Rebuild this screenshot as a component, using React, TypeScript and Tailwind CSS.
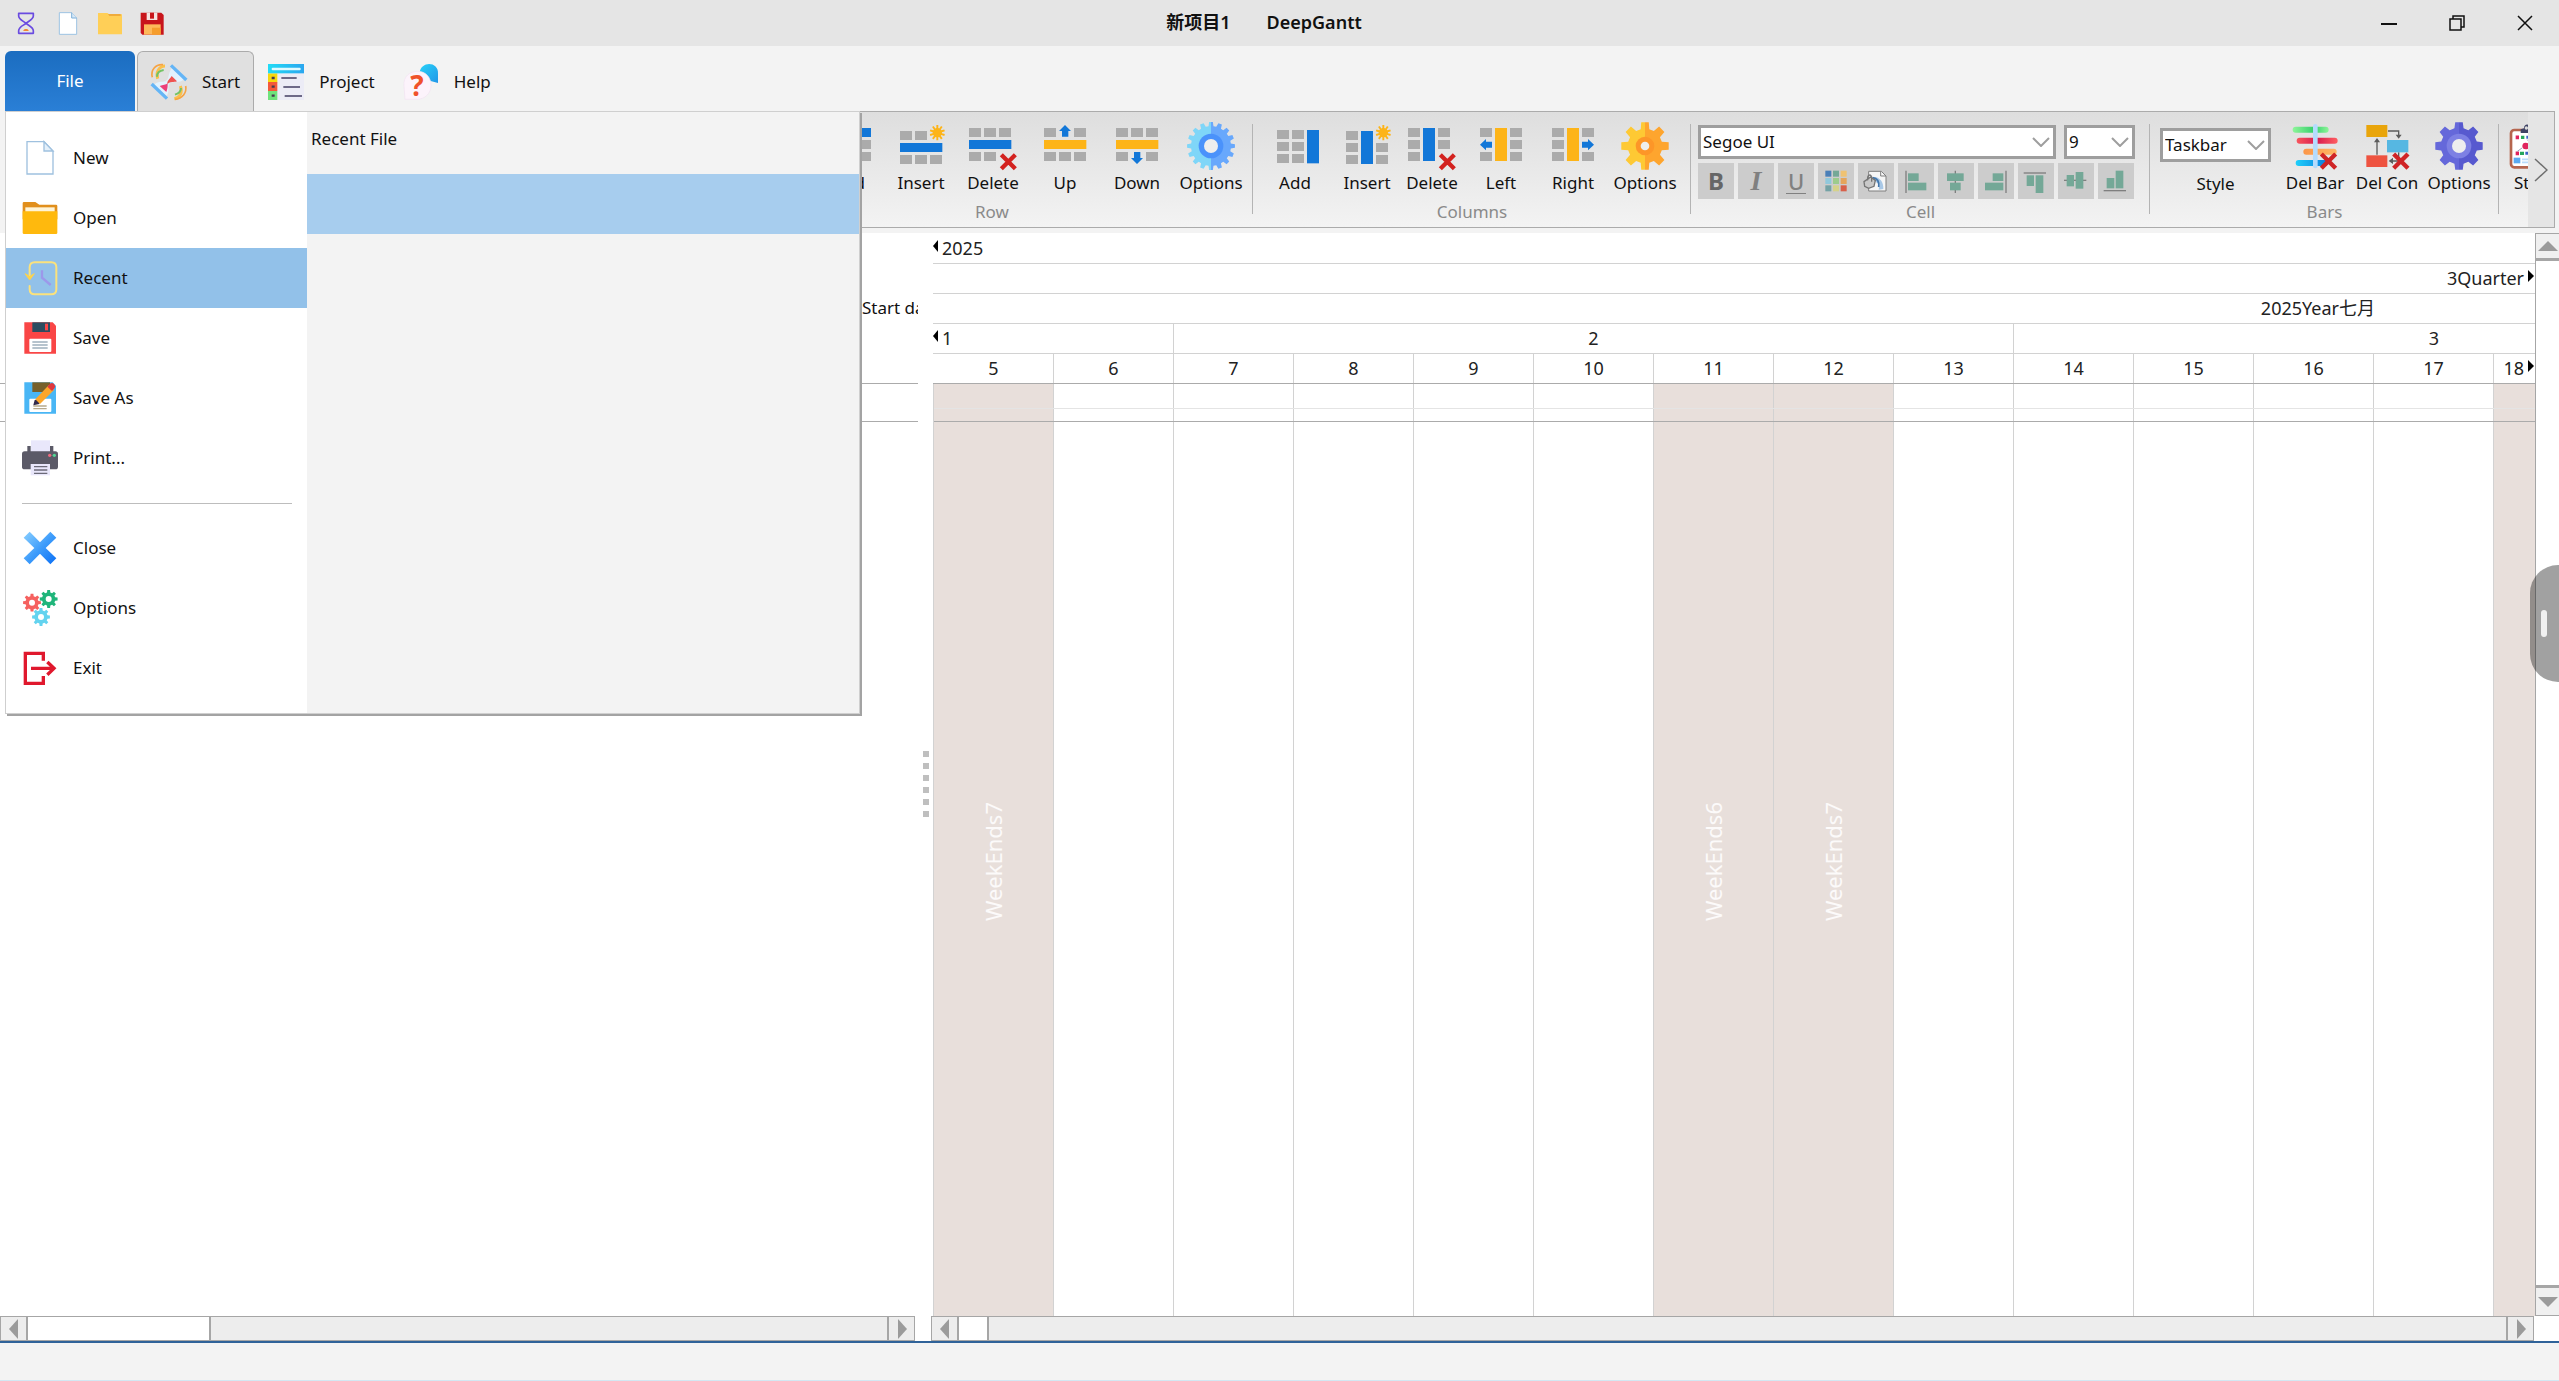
import type { ReactNode } from "react";
import clsx from "clsx";

const FONT = "font-['Noto_Sans','Noto_Sans_CJK_SC',sans-serif]";

function gearPath(cx: number, cy: number, outer: number, inner: number, teeth: number) {
  const pts: string[] = [];
  const step = (Math.PI * 2) / teeth;
  for (let i = 0; i < teeth; i++) {
    const a = i * step - Math.PI / 2;
    [
      [inner, -0.32],
      [outer, -0.2],
      [outer, 0.2],
      [inner, 0.32],
    ].forEach(([r, o]) => {
      pts.push(`${(cx + r * Math.cos(a + o * step)).toFixed(1)} ${(cy + r * Math.sin(a + o * step)).toFixed(1)}`);
    });
  }
  return `M${pts.join("L")}Z`;
}

/* ---------- icon helpers ---------- */

function Svg({ size, box, children }: { size: string; box: number; children: ReactNode }) {
  return (
    <svg className={clsx(size, "shrink-0 overflow-visible")} viewBox={`0 0 ${box} ${box}`} fill="none" aria-hidden="true">
      {children}
    </svg>
  );
}

const Big = ({ children }: { children: ReactNode }) => (
  <Svg size="size-12" box={144}>
    {children}
  </Svg>
);

const Mid = ({ children }: { children: ReactNode }) => (
  <Svg size="size-9" box={108}>
    {children}
  </Svg>
);

const Small = ({ children }: { children: ReactNode }) => (
  <Svg size="size-6" box={72}>
    {children}
  </Svg>
);

const GREY = "#ababab";
const BLUE = "#1277d8";
const AMBER = "#fdb418";

function Cells({ at }: { at: number[][] }) {
  return (
    <>
      {at.map(([x, y]) => (
        <rect key={`${x}-${y}`} x={x} y={y} width="36" height="27" fill={GREY} />
      ))}
    </>
  );
}

const RedCross = ({ y = 95 }: { y?: number }) => (
  <path d={`M97 ${y + 3}l42 42m0-42l-42 42`} stroke="#d3221f" strokeWidth="13" />
);

const Spark = () => <path d={gearPath(121, 32, 23, 14, 10)} fill={AMBER} />;

const RowAdd = () => (
  <Big>
    <rect x="9" y="18" width="129" height="27" fill={BLUE} />
    <Cells at={[[9, 54], [54, 54], [102, 54], [9, 90], [54, 90], [102, 90]]} />
  </Big>
);
const RowInsert = () => (
  <Big>
    <Cells at={[[9, 27], [54, 27], [9, 99], [54, 99], [99, 99]]} />
    <rect x="9" y="63" width="127" height="27" fill={BLUE} />
    <Spark />
  </Big>
);
const RowDelete = () => (
  <Big>
    <Cells at={[[0, 18], [45, 18], [90, 18], [0, 90], [45, 90]]} />
    <rect x="0" y="54" width="127" height="27" fill={BLUE} />
    <RedCross />
  </Big>
);
const RowUp = () => (
  <Big>
    <Cells at={[[9, 18], [99, 18], [9, 90], [54, 90], [99, 90]]} />
    <rect x="9" y="54" width="127" height="27" fill={AMBER} />
    <path d="M72 9l18 18H82v17H63V27H54z" fill={BLUE} />
  </Big>
);
const RowDown = () => (
  <Big>
    <Cells at={[[9, 18], [54, 18], [99, 18], [9, 90], [99, 90]]} />
    <rect x="9" y="54" width="127" height="27" fill={AMBER} />
    <path d="M72 126l18-18H82V90H63v18H54z" fill={BLUE} />
  </Big>
);
const ColAdd = () => (
  <Big>
    <Cells at={[[18, 24], [63, 24], [18, 60], [63, 60], [18, 96], [63, 96]]} />
    <rect x="108" y="24" width="36" height="100" fill={BLUE} />
  </Big>
);
const ColInsert = () => (
  <Big>
    <Cells at={[[9, 27], [9, 63], [99, 63], [9, 99], [99, 99]]} />
    <rect x="54" y="27" width="36" height="99" fill={BLUE} />
    <Spark />
  </Big>
);
const ColDelete = () => (
  <Big>
    <Cells at={[[0, 18], [90, 18], [0, 54], [90, 54], [0, 90]]} />
    <rect x="45" y="18" width="36" height="99" fill={BLUE} />
    <RedCross />
  </Big>
);
const ColLeft = () => (
  <Big>
    <Cells at={[[9, 18], [99, 18], [99, 54], [9, 90], [99, 90]]} />
    <rect x="54" y="18" width="36" height="99" fill={AMBER} />
    <path d="M9 68l18-17v8h18v18H27v8z" fill={BLUE} />
  </Big>
);
const ColRight = () => (
  <Big>
    <Cells at={[[9, 18], [99, 18], [9, 54], [9, 90], [99, 90]]} />
    <rect x="54" y="18" width="36" height="99" fill={AMBER} />
    <path d="M135 68l-18-17v8H99v18h18v8z" fill={BLUE} />
  </Big>
);

function BigGear({ id, left, right, ring, ringSize, hole, teeth, inner }: { id: string; left: string; right: string; ring: string; ringSize: number; hole: number; teeth: number; inner: number }) {
  return (
    <Big>
      <linearGradient id={id}>
        <stop offset="0.5" stopColor={left} />
        <stop offset="0.5" stopColor={right} />
      </linearGradient>
      <path d={gearPath(72, 72, 72, inner, teeth)} fill={`url(#${id})`} />
      <circle cx="72" cy="72" r={ringSize} fill={ring} />
      <circle cx="72" cy="72" r={hole} fill="#eeeeee" />
    </Big>
  );
}

const BlueGear = () => <BigGear id="gb" left="#7fd6f8" right="#68a8fc" ring="#4a92fb" ringSize={37} hole={21} teeth={16} inner={60} />;
const OrangeGear = () => <BigGear id="go" left="#fec934" right="#fea52e" ring="#fd9628" ringSize={28} hole={13} teeth={8} inner={52} />;
const PurpleGear = () => <BigGear id="gp" left="#6568da" right="#5759cf" ring="#7d80e4" ringSize={37} hole={21} teeth={8} inner={55} />;

const DelBar = () => (
  <Big>
    <linearGradient id="d1"><stop stopColor="#8ff59a" /><stop offset=".6" stopColor="#35cf6c" /><stop offset="1" stopColor="#8ff59a" /></linearGradient>
    <linearGradient id="d2"><stop stopColor="#f8555d" /><stop offset=".5" stopColor="#d81b4e" /><stop offset="1" stopColor="#ff5f62" /></linearGradient>
    <linearGradient id="d3"><stop stopColor="#fb9648" /><stop offset="1" stopColor="#ffb765" /></linearGradient>
    <linearGradient id="d4"><stop stopColor="#1fd0fb" /><stop offset="1" stopColor="#0b7bdc" /></linearGradient>
    <rect x="5" y="14" width="108" height="18" rx="9" fill="url(#d1)" />
    <rect x="17" y="47" width="123" height="18" rx="9" fill="url(#d2)" />
    <rect x="37" y="80" width="100" height="18" rx="9" fill="url(#d3)" />
    <rect x="14" y="114" width="96" height="18" rx="9" fill="url(#d4)" />
    <rect x="66" y="6" width="14" height="133" rx="7" fill="#b5dcfd" />
    <path d="M91 96l43 43m0-43l-43 43" stroke="#cf2426" strokeWidth="13" />
  </Big>
);

const DelCon = () => (
  <Big>
    <path d="M75 27h32v14M42 98V58M107 91v26H84" stroke="#5c5c5c" strokeWidth="4" />
    <path d="M98 38h18l-9 12zM33 61h18l-9-13zM90 107v19l-13-9z" fill="#5c5c5c" />
    <rect x="10" y="9" width="63" height="36" fill="#e9a50b" />
    <rect x="72" y="54" width="64" height="37" fill="#56b7e2" />
    <rect x="10" y="100" width="63" height="35" fill="#ee5340" />
    <path d="M92 96l43 43m0-43l-43 43" stroke="#cf2426" strokeWidth="13" />
  </Big>
);

const Clipboard = () => (
  <Big>
    <rect x="3" y="24" width="120" height="112" rx="10" fill="#fff" stroke="#b5654e" strokeWidth="8" />
    <path d="M32 33V22l10-3c0-15 18-15 18 0l12 3v11z" fill="#3e4264" />
    <circle cx="49" cy="18" r="5" fill="#dcdcdc" />
    <path d="M17 46h10M17 94h10" stroke="#e0245e" strokeWidth="11" />
    <path d="M33 46h10M30 94h12" stroke="#26a65b" strokeWidth="10" />
    <path d="M49 46h9M46 94h12" stroke="#3c63c8" strokeWidth="9" />
    <circle cx="47" cy="72" r="10" fill="#e0245e" />
    <path d="M22 88l14-10M60 62l-8-9" stroke="#9aa0b8" strokeWidth="3" />
    <rect x="11" y="107" width="20" height="17" fill="#5aaaf2" />
    <path d="M36 112h26M36 121h26" stroke="#b9dcfb" strokeWidth="5" />
  </Big>
);

/* cell toolbar */

const Sage = "#74a897";

function AlignIcon({ line, a, b }: { line: string; a: number[]; b: number[] }) {
  return (
    <Mid>
      <path d={line} stroke="#7f7f7f" strokeWidth="4" />
      <rect x={a[0]} y={a[1]} width={a[2]} height={a[3]} fill={Sage} />
      <rect x={b[0]} y={b[1]} width={b[2]} height={b[3]} fill={Sage} />
    </Mid>
  );
}

const swatches = ["#4a7fb8", "#74a897", "#efc272", "#90c8dc", "#9ccb8d", "#e5a55c", "#74a2a5", "#d5d28a", "#d8604a"];

const Palette = () => (
  <Mid>
    {swatches.map((c, i) => (
      <rect key={c} x={22 + (i % 3) * 23} y={23 + Math.floor(i / 3) * 22} width="18" height="18" fill={c} />
    ))}
  </Mid>
);

const FillIcon = () => (
  <Mid>
    <path d="M32 25h38l14 14v45H32z" fill="#f6f6f6" stroke="#7f7f7f" strokeWidth="3" />
    <path d="M68 25v14h16" stroke="#7f7f7f" strokeWidth="3" />
    <path d="M36 44c22-8 42 8 40 34l-14 2c4-16-4-24-18-26z" fill="#a9c8e6" />
    <path d="M44 44c14 2 20 12 18 28" stroke="#4377ad" strokeWidth="5" />
    <path d="M18 56l20-14 14 10-4 18-16 6-12-6z" fill="#c9c9c9" stroke="#757575" strokeWidth="4" />
    <path d="M29 52c-2-20 12-20 12-6v10" stroke="#757575" strokeWidth="4" />
  </Mid>
);

const cellTools = [
  { name: "Bold", icon: <span className="text-2xl font-bold text-[#666666]">B</span> },
  { name: "Italic", icon: <span className="font-['Liberation_Serif',serif] text-[28px] font-bold text-[#808080] italic">I</span> },
  { name: "Underline", icon: <span className="border-b border-[#808080] px-0.5 text-[22px] leading-6 font-medium text-[#808080]">U</span> },
  { name: "Text colour", icon: <Palette /> },
  { name: "Fill colour", icon: <FillIcon /> },
  { name: "Align left", icon: <AlignIcon line="M24 23v67" a={[30, 31, 32, 23]} b={[30, 59, 55, 23]} /> },
  { name: "Align centre", icon: <AlignIcon line="M52 23v67" a={[27, 31, 50, 23]} b={[36, 59, 32, 23]} /> },
  { name: "Align right", icon: <AlignIcon line="M84 23v67" a={[44, 31, 32, 23]} b={[21, 59, 55, 23]} /> },
  { name: "Align top", icon: <AlignIcon line="M17 30h67" a={[26, 37, 22, 32]} b={[53, 37, 23, 53]} /> },
  { name: "Align middle", icon: <AlignIcon line="M18 52h67" a={[26, 36, 22, 34]} b={[53, 27, 23, 50]} /> },
  { name: "Align bottom", icon: <AlignIcon line="M17 83h67" a={[26, 45, 23, 31]} b={[53, 23, 23, 53]} /> },
];

/* quick access */

const quick = [
  {
    name: "DeepGantt",
    icon: (
      <Small>
        <path d="M14 7h44v8c0 10-17 17-22 22-5 5-22 10-22 22v8h44v-8c0-10-15-16-22-22S14 25 14 15z" stroke="#6a4be0" strokeWidth="5" strokeLinejoin="round" />
        <path d="M28 60c0-8 16-8 16 0z" fill="#f58634" />
      </Small>
    ),
  },
  {
    name: "New",
    icon: (
      <Small>
        <path d="M10 5h37l15 16v49H10z" fill="#fff" stroke="#9dc3e3" strokeWidth="3" />
        <path d="M47 5v16h15" fill="#d6e8f7" stroke="#7fb0d8" strokeWidth="3" />
      </Small>
    ),
  },
  {
    name: "Open",
    icon: (
      <Small>
        <path d="M0 6h28l6 4h38v60H0z" fill="#ffcf57" />
        <path d="M30 9h38v6H34z" fill="#efab3c" />
      </Small>
    ),
  },
  {
    name: "Save",
    icon: (
      <Small>
        <path d="M2 5h62l7 7v59H7l-5-5z" fill="#c8151b" />
        <rect x="20" y="5" width="32" height="22" fill="#f5e3e1" />
        <path d="M30 5h12v18H30z" fill="#c8151b" />
        <path d="M12 40h50v31H12z" fill="#fdb95a" />
        <path d="M12 50h50v21H36V50z" fill="#f59d2c" />
      </Small>
    ),
  },
];

/* tabs */

const StartIcon = () => (
  <Mid>
    <path d="M20 44c-6-18 4-38 22-38" stroke="#fbc04b" strokeWidth="9" />
    <path d="M4 40C-2 18 14 0 36 2" stroke="#f6a343" strokeWidth="5" />
    <path d="M18 38c0-12 6-18 20-20" stroke="#74c365" strokeWidth="6" />
    <path d="M88 66c8 18-2 36-18 38" stroke="#fbc04b" strokeWidth="9" />
    <path d="M104 66c4 20-10 38-32 40" stroke="#f6a343" strokeWidth="5" />
    <path d="M90 72c0 12-6 16-18 20" stroke="#74c365" strokeWidth="6" />
    <path d="M64 12l34 34c-12 14-30 4-42 12-8 12 2 24-10 38L10 62c12-14 28-4 38-14 8-10 4-26 16-36z" fill="#e3f2fd" />
    <path d="M62 36l16 16c-10 4-20 0-28 8-4-8 6-14 12-24z" fill="#ef5350" />
    <path d="M50 58c0 10 0 16-4 26L26 66c10-4 18-2 24-8z" fill="#ec407a" />
    <path d="M60 4l46 44" stroke="#64b5f6" strokeWidth="10" />
    <path d="M2 60l46 44" stroke="#64b5f6" strokeWidth="10" />
  </Mid>
);

const ProjectIcon = () => (
  <Mid>
    <linearGradient id="pj"><stop stopColor="#21dcf6" /><stop offset="1" stopColor="#2aa6ef" /></linearGradient>
    <rect x="28" y="26" width="80" height="82" fill="#ececf6" />
    <rect y="28" width="28" height="27" fill="#f6d80d" />
    <rect y="54" width="28" height="27" fill="#f4583a" />
    <rect y="81" width="28" height="27" fill="#6fe37b" />
    <path d="M11 42h9M11 68h9M11 95h9" stroke="#463a4e" strokeWidth="7" />
    <path d="M40 42h46M46 69h50M50 96h52" stroke="#433e63" strokeWidth="5" />
    <rect width="108" height="28" fill="url(#pj)" />
    <rect x="11" y="11" width="87" height="8" rx="3" fill="#dffaff" />
  </Mid>
);

const HelpIcon = () => (
  <Mid>
    <linearGradient id="hp" x1="0" y1="0" x2="1" y2="1"><stop stopColor="#28d2f8" /><stop offset="1" stopColor="#2196e8" /></linearGradient>
    <path d="M50 26C54-10 108-8 105 30v27l-22-6z" fill="url(#hp)" />
    <path d="M6 106l-3-40C0 36 22 22 44 22c24 0 40 18 40 42s-18 42-42 42z" fill="#fcf3fb" stroke="#f1e2f2" strokeWidth="2" />
    <text x="42" y="95" textAnchor="middle" className="text-[84px] leading-none font-bold" fill="#f0512b">?</text>
  </Mid>
);

const tabs = [
  { label: "Start", icon: <StartIcon />, style: "ml-0.5 gap-[15px] px-[13px] border-[#ababab] bg-[#e0e0e0]" },
  { label: "Project", icon: <ProjectIcon />, style: "gap-[15px] px-[13px] border-transparent" },
  { label: "Help", icon: <HelpIcon />, style: "gap-[15px] px-[13px] border-transparent" },
];

/* file menu */

function Floppy({ body, shutter, accent }: { body: string; shutter: string; accent: string }) {
  return (
    <>
      <path d="M7 7h85l10 10v84H7z" fill={body} />
      <rect x="31" y="7" width="53" height="29" fill={shutter} />
      <rect x="69" y="11" width="9" height="20" fill={accent} />
      <rect x="22" y="56" width="66" height="40" rx="3" fill="#fff" />
    </>
  );
}

const menuTop = [
  {
    label: "New",
    icon: (
      <Mid>
        <path d="M15 5h51l27 28v69H15z" fill="#fff" stroke="#9fc1df" strokeWidth="4" />
        <path d="M66 5v28h27z" fill="#e4f0fa" stroke="#9fc1df" strokeWidth="4" />
      </Mid>
    ),
  },
  {
    label: "Open",
    icon: (
      <Mid>
        <path d="M2 10q0-4 4-4h34l12 8h50q4 0 4 4v40H2z" fill="#e18f1c" />
        <path d="M10 22h88v20H10z" fill="#fff4d6" />
        <path d="M2 34h104v64q0 4-4 4H6q-4 0-4-4z" fill="#ffb90d" />
      </Mid>
    ),
  },
  {
    label: "Recent",
    icon: (
      <Mid>
        <path d="M23 50V22q0-15 15-15h50q15 0 15 15v66q0 15-15 15H38q-15 0-15-15V78" stroke="#fbe27c" strokeWidth="6" strokeLinecap="round" />
        <path d="M9 41l14 19 14-19-14 8z" fill="#fbd34f" stroke="#fbd34f" strokeWidth="3" />
        <path d="M60 31v22l26 22" stroke="#9c98ea" strokeWidth="7" />
      </Mid>
    ),
  },
  {
    label: "Save",
    icon: (
      <Mid>
        <Floppy body="#f94646" shutter="#2c4c60" accent="#f94646" />
        <path d="M31 66h46M31 75h46M31 84h46" stroke="#9eb0bd" strokeWidth="4" />
      </Mid>
    ),
  },
  {
    label: "Save As",
    icon: (
      <Mid>
        <Floppy body="#49b6f5" shutter="#77602a" accent="#77602a" />
        <path d="M34 78h40M34 86h40" stroke="#b7a98c" strokeWidth="4" />
        <path d="M38 60l16-2-2 14-18 4z" fill="#322a4b" />
        <path d="M40 58l40-42 16 14-42 42z" fill="#fca62a" />
        <path d="M76 20l8-9q6-5 12 1t2 12l-8 9z" fill="#e0383f" />
      </Mid>
    ),
  },
  {
    label: "Print...",
    icon: (
      <Mid>
        <path d="M16 40V18h10v22M82 40V18h12v22" fill="#5b5a67" />
        <rect x="27" y="1" width="57" height="36" fill="#e9e7fb" />
        <rect y="34" width="108" height="54" rx="8" fill="#5b5a67" />
        <circle cx="83" cy="46" r="5" fill="#ef6a7e" />
        <circle cx="97" cy="46" r="5" fill="#54d695" />
        <rect x="26" y="72" width="58" height="34" fill="#e9e7fb" />
        <path d="M36 80h40M36 90h40M36 100h40" stroke="#6b6a78" strokeWidth="4" />
      </Mid>
    ),
  },
];

const menuBottom = [
  {
    label: "Close",
    icon: (
      <Mid>
        <linearGradient id="cx" x1="0" y1="0" x2="1" y2="1"><stop stopColor="#8bd0ff" /><stop offset=".5" stopColor="#3f9dfb" /><stop offset="1" stopColor="#0a6ff5" /></linearGradient>
        <path d="M23 5l31 32L85 5l18 18-32 31 32 31-18 18-31-32-31 32L5 85l32-31L5 23z" fill="url(#cx)" />
      </Mid>
    ),
  },
  {
    label: "Options",
    icon: (
      <Mid>
        <path d={gearPath(30, 38, 27, 20, 8)} fill="#f5615f" />
        <circle cx="30" cy="38" r="9" fill="#fff" />
        <path d={gearPath(80, 27, 27, 20, 8)} fill="#1fb57a" />
        <circle cx="80" cy="27" r="9" fill="#fff" />
        <path d={gearPath(57, 81, 27, 20, 8)} fill="#63d3ef" />
        <circle cx="57" cy="81" r="9" fill="#fff" />
      </Mid>
    ),
  },
  {
    label: "Exit",
    icon: (
      <Mid>
        <path d="M64 32V10H10v90h54V78" stroke="#e0182d" strokeWidth="10" />
        <path d="M27 55h66M76 36l20 19-20 19" stroke="#e0182d" strokeWidth="10" />
      </Mid>
    ),
  },
];

function MenuItem({ label, icon }: { label: string; icon: ReactNode }) {
  return (
    <button
      type="button"
      className={clsx("flex h-15 w-full items-center gap-[15px] pl-4 text-left", label === "Recent" && "bg-[#92c1e9]")}
    >
      {icon}
      {label}
    </button>
  );
}

function FileMenu() {
  return (
    <div className="absolute top-0 left-[5px] z-10 flex h-[603px] w-[855px] border border-[#cfcfcf] bg-white shadow-[2px_2px_0_#a3a3a3]">
      <nav className="w-[301px] shrink-0 pt-4">
        {menuTop.map((m) => (
          <MenuItem key={m.label} {...m} />
        ))}
        <div className="flex h-[30px] items-center pr-[15px] pl-4">
          <hr className="w-full border-[#bdbdbd]" />
        </div>
        {menuBottom.map((m) => (
          <MenuItem key={m.label} {...m} />
        ))}
      </nav>
      <div className="flex-1 bg-[#f3f3f3]">
        <h2 className="px-1 pt-[15px] leading-6">Recent File</h2>
        <button type="button" aria-label="Recent file" className="mt-[23px] block h-15 w-full bg-[#a7cdee]" />
      </div>
    </div>
  );
}

/* ---------- ribbon ---------- */

function ToolButton({ label, icon, width = "w-[72px]" }: { label: string; icon: ReactNode; width?: string }) {
  return (
    <button type="button" className={clsx("flex shrink-0 flex-col items-center whitespace-nowrap", width)}>
      {icon}
      <span className="mt-px leading-6">{label}</span>
    </button>
  );
}

function Group({ title, className, children }: { title?: string; className: string; children: ReactNode }) {
  return (
    <section className={clsx("relative flex shrink-0 flex-col pt-2.5", className)}>
      <div className="flex h-[78px]">{children}</div>
      <div className="text-center leading-6 text-[#8a8a8a]">{title}</div>
      <div className="absolute top-3 right-0 h-[90px] w-px bg-[#b4b4b4]" />
    </section>
  );
}

function Combo({ label, value, className }: { label: string; value: string; className: string }) {
  return (
    <div className={clsx("relative", className)}>
      <select aria-label={label} defaultValue={value} className="size-full appearance-none border-3 border-[#9e9e9e] bg-white pl-0.5 outline-none">
        <option>{value}</option>
      </select>
      <svg className="pointer-events-none absolute top-3 right-1.5 h-2.5 w-[18px]" viewBox="0 0 18 10" fill="none">
        <path d="M1 1l8 8 8-8" stroke="#9e9e9e" strokeWidth="2" />
      </svg>
    </div>
  );
}

function Ribbon() {
  return (
    <div className="mr-1 ml-[5px] flex h-[117px] overflow-hidden border border-[#ababab] bg-linear-to-b from-[#dedede] to-[#f3f3f3] pl-[725px]">
      <Group title="Row" className="w-[522px]">
        <div className="flex w-full justify-end pr-1">
          <ToolButton label="Add" icon={<RowAdd />} />
          <ToolButton label="Insert" icon={<RowInsert />} />
          <ToolButton label="Delete" icon={<RowDelete />} />
          <ToolButton label="Up" icon={<RowUp />} />
          <ToolButton label="Down" icon={<RowDown />} />
          <ToolButton label="Options" icon={<BlueGear />} width="w-[76px]" />
        </div>
      </Group>
      <Group title="Columns" className="w-[438px]">
        <div className="flex pl-1.5">
          <ToolButton label="Add" icon={<ColAdd />} />
          <ToolButton label="Insert" icon={<ColInsert />} />
          <ToolButton label="Delete" icon={<ColDelete />} width="w-[58px]" />
          <ToolButton label="Left" icon={<ColLeft />} width="w-20" />
          <ToolButton label="Right" icon={<ColRight />} width="w-16" />
          <ToolButton label="Options" icon={<OrangeGear />} width="w-20" />
        </div>
      </Group>
      <Group title="Cell" className="w-[459px]">
        <div className="flex flex-col gap-1 pt-[3px] pl-[7px]">
          <div className="flex gap-2">
            <Combo label="Font" value="Segoe UI" className="h-[34px] w-[358px]" />
            <Combo label="Font size" value="9" className="h-[34px] w-[71px]" />
          </div>
          <div className="flex gap-1">
            {cellTools.map((t) => (
              <button key={t.name} type="button" aria-label={t.name} className="flex size-9 items-center justify-center bg-[#cccccc]">
                {t.icon}
              </button>
            ))}
          </div>
        </div>
      </Group>
      <Group title="Bars" className="w-[349px]">
        <div className="flex flex-col items-center pt-1.5 pr-2 pl-2.5">
          <Combo label="Style" value="Taskbar" className="h-[34px] w-[111px]" />
          <span className="mt-2.5 leading-6">Style</span>
        </div>
        <ToolButton label="Del Bar" icon={<DelBar />} />
        <ToolButton label="Del Con" icon={<DelCon />} />
        <ToolButton label="Options" icon={<PurpleGear />} />
      </Group>
      <div className="min-w-0 flex-1 overflow-hidden pt-2.5 pl-[11px]">
        <Clipboard />
        <div className="mt-px pl-1 leading-6 whitespace-nowrap">Status</div>
      </div>
      <button type="button" aria-label="Scroll ribbon" className="relative flex w-[26px] shrink-0 items-center justify-center bg-[#e5e5e5]">
        <svg className="h-6 w-3.5" viewBox="0 0 14 24" fill="none">
          <path d="M1 1l12 11L1 23" stroke="#6e6e6e" strokeWidth="1.5" />
        </svg>
      </button>
    </div>
  );
}

/* ---------- scrollbars ---------- */

const triangles = {
  left: "M10 1v20L1 11z",
  right: "M2 1v20l9-10z",
};

function HBar({ thumb, className }: { thumb: string; className?: string }) {
  return (
    <div className={clsx("flex h-[25px] border border-[#a6a6a6] bg-[#ededed]", className)}>
      <button type="button" aria-label="Scroll left" className="flex w-[27px] items-center justify-center border-r-2 border-[#a6a6a6]">
        <svg className="h-[22px] w-3" viewBox="0 0 12 22"><path d={triangles.left} fill="#9b9b9b" /></svg>
      </button>
      <div className={clsx("border-r-2 border-[#a6a6a6] bg-white", thumb)} />
      <div className="flex-1" />
      <button type="button" aria-label="Scroll right" className="flex w-[27px] items-center justify-center border-l-2 border-[#a6a6a6]">
        <svg className="h-[22px] w-3" viewBox="0 0 12 22"><path d={triangles.right} fill="#9b9b9b" /></svg>
      </button>
    </div>
  );
}

function VBar() {
  return (
    <div className="flex w-6 shrink-0 flex-col border border-r-0 border-[#a6a6a6] bg-white">
      <button type="button" aria-label="Scroll up" className="flex h-[27px] items-center justify-center border-b-3 border-[#a6a6a6] bg-[#f0f0f0]">
        <svg className="h-2.5 w-5" viewBox="0 0 20 10"><path d="M0 10h20L10 0z" fill="#9b9b9b" /></svg>
      </button>
      <div className="flex-1" />
      <button type="button" aria-label="Scroll down" className="flex h-[30px] items-center justify-center border-t-3 border-[#a6a6a6] bg-[#f0f0f0]">
        <svg className="h-2.5 w-5" viewBox="0 0 20 10"><path d="M0 0h20L10 10z" fill="#9b9b9b" /></svg>
      </button>
    </div>
  );
}

/* ---------- chart ---------- */

const days = Array.from({ length: 14 }, (_, i) => i + 5);
const weekends: Record<number, string> = { 5: "WeekEnds7", 11: "WeekEnds6", 12: "WeekEnds7", 18: "" };

const Back = () => (
  <svg className="mt-1.5 h-3 w-[5px] shrink-0" viewBox="0 0 5 12"><path d="M5 0v12L0 6z" fill="#000" /></svg>
);
const Forward = () => (
  <svg className="mt-1.5 h-3 w-1.5 shrink-0" viewBox="0 0 6 12"><path d="M0 0v12l6-6z" fill="#000" /></svg>
);

function Timeline() {
  const row = "flex h-[30px] shrink-0 border-b border-[#d2d2d2] leading-7 whitespace-nowrap overflow-hidden";
  return (
    <div className="flex min-w-0 flex-1 flex-col overflow-hidden pt-px text-lg text-[#222222]">
      <div className={clsx(row, "gap-1")}>
        <Back />
        2025
      </div>
      <div className={clsx(row, "justify-end gap-1 pr-px")}>
        3Quarter
        <Forward />
      </div>
      <div className={clsx(row, "justify-end pr-40")}>2025Year七月</div>
      <div className={row}>
        <div className="flex w-[241px] shrink-0 gap-1 border-r border-[#d2d2d2]">
          <Back />1
        </div>
        <div className="w-[840px] shrink-0 border-r border-[#d2d2d2] text-center">2</div>
        <div className="w-[840px] shrink-0 text-center">3</div>
      </div>
      <div className="flex h-[30px] shrink-0 overflow-hidden border-b border-[#ababab] pl-px leading-7">
        {days.map((d) => (
          <div key={d} className={clsx("border-r border-[#d2d2d2] text-center", d < 18 ? "w-[120px] shrink-0" : "flex flex-1 justify-end gap-1 border-r-0 pr-px")}>
            {d}
            {d === 18 && <Forward />}
          </div>
        ))}
      </div>
      <div className="relative flex flex-1 overflow-hidden border-l border-[#d2d2d2]">
        {days.map((d) => (
          <div
            key={d}
            className={clsx(
              "flex items-center justify-center border-r border-[#d2d2d2] pt-[23px]",
              d < 18 ? "w-[120px] shrink-0" : "flex-1 border-r-0",
              d in weekends && "bg-[#e8dfdb]",
            )}
          >
            <span className="rotate-180 text-[22px] text-white/85 [writing-mode:vertical-rl]">{weekends[d]}</span>
          </div>
        ))}
        <div className="absolute inset-x-0 top-6 h-[14px] border-t border-b border-t-[#e4e4e4] border-b-[#ababab]" />
      </div>
    </div>
  );
}

function TitleBar() {
  return (
    <header className="flex h-[46px] shrink-0 items-center bg-[#e5e5e5] pl-[5px]">
      {quick.map((q) => (
        <button key={q.name} type="button" aria-label={q.name} className="flex h-full w-[42px] items-center justify-center">
          {q.icon}
        </button>
      ))}
      <h1 className="flex flex-1 justify-center gap-9 pb-0.5 text-lg font-semibold text-[#111111]">
        <span>新项目1</span>
        <span>DeepGantt</span>
      </h1>
      <div className="flex h-full">
        <button type="button" aria-label="Minimize" className="flex w-[68px] items-center justify-center">
          <svg className="size-4" viewBox="0 0 16 16"><path d="M0 8h16v2H0z" fill="#111" /></svg>
        </button>
        <button type="button" aria-label="Restore" className="flex w-[68px] items-center justify-center">
          <svg className="size-4" viewBox="0 0 16 16" fill="none" stroke="#111" strokeWidth="1.5"><path d="M1 4h11v11H1zM4 4V1h11v11h-3" /></svg>
        </button>
        <button type="button" aria-label="Close" className="flex w-[68px] items-center justify-center">
          <svg className="size-4" viewBox="0 0 16 16" stroke="#111" strokeWidth="1.5"><path d="M1 1l14 14M15 1L1 15" /></svg>
        </button>
      </div>
    </header>
  );
}

export default function App() {
  return (
    <div className={clsx("relative flex h-screen flex-col overflow-hidden bg-white text-[17px] text-[#111111]", FONT)}>
      <TitleBar />

      <div className="flex h-[65px] shrink-0 items-end bg-[#f3f3f3] pl-[5px]">
        <button type="button" className="h-15 w-[130px] rounded-t-md bg-linear-to-b from-[#1b6dc0] to-[#2a7fd6] text-white">
          File
        </button>
        {tabs.map((t) => (
          <button key={t.label} type="button" className={clsx("flex h-15 items-center rounded-t-md border border-b-0", t.style)}>
            {t.icon}
            {t.label}
          </button>
        ))}
      </div>

      <div className="relative flex min-h-0 flex-1 flex-col">
        <FileMenu />
        <div className="shrink-0 bg-[#f3f3f3] pb-[5px]">
          <Ribbon />
        </div>

        <main className="flex min-h-0 flex-1">
          <div className="flex w-[918px] shrink-0 flex-col">
            <div className="flex h-[151px] shrink-0 items-center overflow-hidden border-b border-[#ababab] pl-[862px]">
              <span className="overflow-hidden whitespace-nowrap">Start date</span>
            </div>
            <div className="h-[38px] shrink-0 border-b border-[#ababab]" />
            <div className="flex-1" />
            <HBar thumb="w-[183px]" className="mr-[3px]" />
          </div>
          <div className="flex w-[13px] shrink-0 flex-col items-center justify-center gap-1.5 pb-1.5 pl-0.5">
            {[0, 1, 2, 3, 4, 5].map((i) => (
              <i key={i} className="size-1.5 shrink-0 bg-[#bfbfbf]" />
            ))}
          </div>
          <div className="flex min-w-0 flex-1 flex-col">
            <div className="flex min-h-0 flex-1 pl-0.5">
              <Timeline />
              <VBar />
            </div>
            <HBar thumb="w-[30px]" className="mr-[25px]" />
          </div>
        </main>
      </div>

      <footer className="h-10 shrink-0 border-t-2 border-b border-t-[#2f6299] border-b-[#d3e8f3] bg-[#f3f3f3]" />

      <div className="absolute top-[565px] right-0 z-20 flex h-[117px] w-[29px] items-center rounded-l-[28px] bg-black/37 pl-[11px]">
        <div className="h-[27px] w-1.5 rounded-full bg-[#f0f0f0]" />
      </div>
    </div>
  );
}
